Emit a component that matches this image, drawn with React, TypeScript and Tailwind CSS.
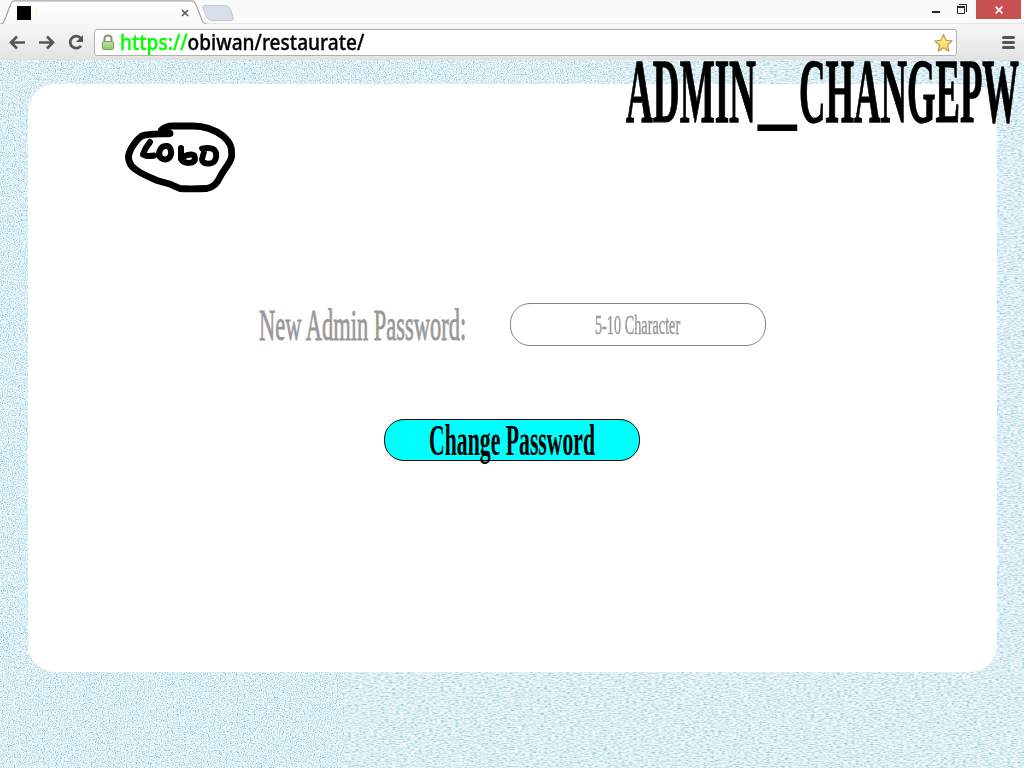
import React from "react";

const serif = "font-['Liberation_Serif','Times_New_Roman',serif]";

function Texture() {
  return (
    <svg className="absolute inset-0 h-full w-full" width="1024" height="708" viewBox="0 0 1024 708" aria-hidden="true">
      <defs>
        <filter id="grain" x="0" y="0" width="100%" height="100%" colorInterpolationFilters="sRGB">
          <feTurbulence type="fractalNoise" baseFrequency="0.83" numOctaves="2" seed="4" />
          <feColorMatrix values="1 0 0 0 0  1 0 0 0 0  1 0 0 0 0  0 0 0 0 1" />
          <feComponentTransfer>
            <feFuncR type="table" tableValues="0.3 0.45 0.68 0.88 0.98 1 1" />
            <feFuncG type="table" tableValues="0.65 0.74 0.86 0.945 0.99 1 1" />
            <feFuncB type="table" tableValues="0.78 0.84 0.91 0.965 0.99 1 1" />
          </feComponentTransfer>
        </filter>
        <filter id="streaks" x="0" y="0" width="100%" height="100%" colorInterpolationFilters="sRGB">
          <feTurbulence type="fractalNoise" baseFrequency="0.27 0.77" numOctaves="2" seed="9" />
          <feColorMatrix values="1 0 0 0 0  1 0 0 0 0  1 0 0 0 0  0 0 0 0 1" />
          <feComponentTransfer>
            <feFuncR type="table" tableValues="0.5 0.6 0.75 0.87 0.95 1 1" />
            <feFuncG type="table" tableValues="0.74 0.8 0.88 0.94 0.975 1 1" />
            <feFuncB type="table" tableValues="0.82 0.87 0.92 0.96 0.985 1 1" />
          </feComponentTransfer>
        </filter>
      </defs>
      <rect x="344" width="680" height="708" filter="url(#streaks)" />
      <rect width="344" height="708" filter="url(#grain)" />
      <rect x="344" width="279" height="24" filter="url(#grain)" />
    </svg>
  );
}

function TabStrip() {
  return (
    <div className="relative flex h-6 bg-[#fafafa]">
      <svg className="absolute left-0 top-0" width="1024" height="25" viewBox="0 0 1024 25" fill="none" aria-hidden="true">
        <defs>
          <linearGradient id="tab" x1="0" y1="0" x2="0" y2="1">
            <stop stopColor="#ffffff" />
            <stop offset="1" stopColor="#f8f8f8" />
          </linearGradient>
        </defs>
        <path d="M0 24.500C3 24 4 22 5 19L10 6C11 2 12 .8 15 .8H190C194 .8 195 2 196.500 6L202 20C203.500 23.500 205 24.300 208 24.300H1024V26H0Z" fill="url(#tab)" stroke="#a9a9a9" strokeWidth="1.300" />
        <path d="M205 5.500H225Q229 5.500 230.500 9L233 17Q234 20.500 231 20.500H212Q208 20.500 206.500 17L203 8.500Q202 5.500 205 5.500Z" fill="#d8dee7" stroke="#c5cad0" />
      </svg>
      <div className="relative ml-[17px] mt-1.5 h-3.5 w-3.5 bg-black" />
      <div className="relative ml-[5px] mt-2 h-2.5 w-px bg-[#fff7b8]" />
      <svg className="relative ml-[144px] mt-[9px]" width="8" height="8" viewBox="0 0 8 8" aria-label="Close tab"><path d="M1 1L7 7M7 1L1 7" stroke="#5c5c5c" strokeWidth="1.700" /></svg>
      <div className="relative ml-auto flex h-[19px]">
        <svg width="48" height="19" viewBox="0 0 48 19" fill="none" stroke="#222" aria-label="Window controls">
          <path d="M4 12H12" strokeWidth="2" />
          <path d="M29.500 6.500H36.500V13.500H29.500Z" />
          <path d="M29 7H37" strokeWidth="2" />
          <path d="M31 4.500H38.500V12" />
        </svg>
        <div className="flex w-[45px] items-center justify-center bg-[#c75050]">
          <svg width="8" height="8" viewBox="0 0 8 8"><path d="M.6 .6L7.400 7.400M7.400 .6L.6 7.400" stroke="#fff" strokeWidth="1.700" /></svg>
        </div>
        <div className="w-[3px]" />
      </div>
    </div>
  );
}

function Toolbar() {
  return (
    <div className="relative flex h-9 items-start bg-linear-to-b from-[#f8f8f8] to-[#e2e2e2] pt-[5px]">
      <svg className="h-7 w-[94px] shrink-0" width="94" height="28" viewBox="0 0 94 28" fill="none" stroke="#555" strokeWidth="2.700" aria-hidden="true">
        <path d="M25 13.500H12M17 7.500L11 13.500L17 19.500" />
        <path d="M39 13.500H52M47 7.500L53 13.500L47 19.500" />
        <path d="M80.500 9A6 6 0 1 0 81 16.800" />
        <path d="M83 6V13H76Z" fill="#555" stroke="none" />
      </svg>
      <div className="flex h-[27px] w-[863px] items-center rounded-[3px] border border-[#b0b0b0] bg-white">
        <svg className="ml-[7px]" width="12" height="17" viewBox="0 0 12 17" fill="none" aria-hidden="true">
          <path d="M2.500 8V5Q2.500 1.500 6 1.500T9.500 5V8" stroke="#8b8b8b" strokeWidth="2" />
          <rect x=".5" y="7.500" width="11" height="8" rx=".8" fill="#a5d886" stroke="#6fa653" />
          <path d="M1.500 9H10.500" stroke="#c2e6a9" />
          <path d="M1.500 14H10.500" stroke="#85c463" />
        </svg>
        <div className="ml-[6px] w-[250px] whitespace-nowrap">
          <span className="inline-block origin-left scale-x-[.909] font-['Noto_Sans',sans-serif] text-[21px] font-medium leading-6 text-black [-webkit-text-stroke:.35px_currentColor]"><span className="text-[#00ff00]">https://</span>obiwan/restaurate/</span>
        </div>
        <svg className="ml-auto mr-[3px]" width="20" height="20" viewBox="0 0 20 20" aria-label="Bookmark">
          <defs><linearGradient id="gold" x1="0" y1="0" x2="0" y2="1"><stop stopColor="#fff2a6" /><stop offset=".6" stopColor="#fde37a" /><stop offset="1" stopColor="#f3c34d" /></linearGradient></defs>
          <path d="M10.500 1.500L13 7.300L19 7.900L14.500 12L15.800 18.100L10.500 15L5.200 18.100L6.500 12L2 7.900L8 7.300Z" fill="url(#gold)" stroke="#c99b55" strokeWidth="1.300" strokeLinejoin="round" />
        </svg>
      </div>
      <svg className="ml-[45px] mt-[7px]" width="13" height="13" viewBox="0 0 13 13" stroke="#555" strokeWidth="3" strokeLinecap="round" aria-label="Menu">
        <path d="M1.500 1.500H11.500M1.500 6.500H11.500M1.500 11.500H11.500" />
      </svg>
    </div>
  );
}

function Logo() {
  return (
    <svg className="ml-[92px] mt-[35px] blur-[.7px]" width="118" height="76" viewBox="120 119 118 76" fill="none" stroke="#000" strokeLinecap="round" strokeLinejoin="round" aria-label="Logo">
      <path d="M170 133.500C161 134.500 150 133 142 136C138 138 131 147 129.300 153C127 158 130 166 135 169C141 174 149 177 157 180.500C164 182 171 184 180 188.500C186 189 195 189 207 188.500C214 187 218 182 220 177C224 169 230 164 231.500 157C232.500 147 230 142 223 136C215 130 204 126 193 126H173Q166 126 161.500 130" strokeWidth="6.800" />
      <path d="M150 142Q145 148 143 154.500Q148 157 154 155.500M167 146C160 145 157 154 161 158C167 162 173 157 170.500 149Q169 146 167 146M181 148V159C184 164.500 195 164 195 158.500C195 153 188 154 183 157" strokeWidth="6" />
      <path d="M202 148.500Q211 147 214.500 150C217.500 154 217 162.500 210 163.500Q202 164 202 159L204 152" strokeWidth="5.800" />
    </svg>
  );
}

export default function App() {
  return (
    <div className="flex h-[768px] w-[1024px] flex-col overflow-hidden bg-white">
      <TabStrip />
      <Toolbar />
      <div className="relative h-[708px] bg-[#d9eef5]">
        <Texture />
        <div className="relative pl-[28px] pt-[24px]">
          <main className="h-[588px] w-[969px] rounded-[27px] bg-white">
            <div className="flex h-[219px]"><Logo /></div>
            <div className="flex h-[43px] items-center pl-[231px]">
              <label htmlFor="password" className="w-[251px] whitespace-nowrap"><span className={`${serif} inline-block origin-left translate-y-px scale-x-[.505] text-[44.5px] leading-[43px] text-[#999] [-webkit-text-stroke:.9px_#999]`}>New Admin Password:</span></label>
              <div id="password" className="flex h-[43px] w-[256px] items-center justify-center rounded-[20px] border border-[#858585]">
                <span className={`${serif} scale-x-[.51] whitespace-nowrap text-[28px] leading-9 text-[#999] [-webkit-text-stroke:.5px_#999]`}>5-10 Character</span>
              </div>
            </div>
            <button className="ml-[356px] mt-[73px] flex h-[42px] w-[256px] items-center justify-center rounded-[20px] border border-black bg-[#00ffff]">
              <span className={`${serif} translate-y-px scale-x-[.494] whitespace-nowrap text-[44px] font-bold leading-[42px]`}>Change Password</span>
            </button>
          </main>
        </div>
        <h1 className={`${serif} absolute left-[626px] top-[-22px] flex whitespace-nowrap text-[91px] font-bold leading-[107px] text-black [-webkit-text-stroke:1.3px_#000]`}>
          <span className="w-[132px]"><span className="inline-block origin-left scale-x-[.408]">ADMIN</span></span>
          <span className="w-[41px]"><span className="inline-block origin-left scale-x-[.85] -translate-y-[4px] [-webkit-text-stroke:0]">_</span></span>
          <span className="w-[221px]"><span className="inline-block origin-left scale-x-[.403]">CHANGEPW</span></span>
        </h1>
      </div>
    </div>
  );
}
